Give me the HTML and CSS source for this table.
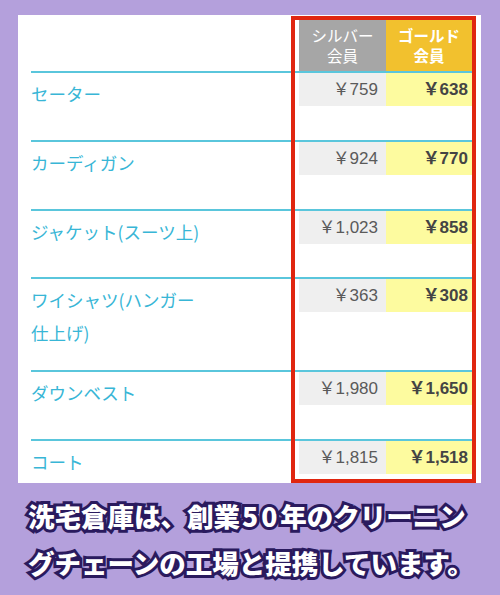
FILE: index.html
```html
<!DOCTYPE html>
<html lang="ja">
<head>
<meta charset="utf-8">
<link rel="stylesheet" href="styles.css">
</head>
<body>
<div class="panel">
  <div class="table">
    <div class="row head">
      <div class="label"></div>
      <div class="cell silver">シルバー<br>会員</div>
      <div class="cell gold">ゴールド<br>会員</div>
    </div>
    <div class="row h69">
      <div class="label">セーター</div>
      <div class="price silver">￥759</div>
      <div class="price gold">￥638</div>
    </div>
    <div class="row h69">
      <div class="label">カーディガン</div>
      <div class="price silver">￥924</div>
      <div class="price gold">￥770</div>
    </div>
    <div class="row h68">
      <div class="label">ジャケット(スーツ上)</div>
      <div class="price silver">￥1,023</div>
      <div class="price gold">￥858</div>
    </div>
    <div class="row h93">
      <div class="label">ワイシャツ(ハンガー<br>仕上げ)</div>
      <div class="price silver">￥363</div>
      <div class="price gold">￥308</div>
    </div>
    <div class="row h69">
      <div class="label">ダウンベスト</div>
      <div class="price silver">￥1,980</div>
      <div class="price gold">￥1,650</div>
    </div>
    <div class="row h69">
      <div class="label">コート</div>
      <div class="price silver">￥1,815</div>
      <div class="price gold">￥1,518</div>
    </div>
  </div>
  <div class="redbox"></div>
</div>
<p class="caption">洗宅倉庫は、創業<span class="num">50</span>年のクリーニン<br>グチェーンの工場と提携しています。</p>
</body>
</html>
```
FILE: styles.css
```css
html, body {
  margin: 0;
  padding: 0;
}
body {
  width: 500px;
  height: 595px;
  background: #b4a0dc;
  font-family: "Noto Sans CJK JP", "Noto Sans", sans-serif;
  overflow: hidden;
}
.panel {
  position: relative;
  margin: 15px 0 0 18px;
  width: 463px;
  height: 468px;
  background: #fff;
  overflow: hidden;
}
.table {
  padding: 3px 0 0 13px;
  width: 441px;
}
.row {
  display: flex;
  align-items: flex-start;
  border-top: 2px solid #5ac6dc;
  box-sizing: border-box;
}
.row.head {
  border-top: none;
  height: 53px;
}
.h69 { height: 69px; }
.h68 { height: 68px; }
.h93 { height: 93px; }
.label {
  width: 268px;
  padding-top: 4px;
  font-size: 17.5px;
  line-height: 33px;
  color: #38b6d6;
}
.cell {
  width: 87px;
  height: 53px;
  box-sizing: border-box;
  padding-top: 7px;
  text-align: center;
  color: #fff;
  font-size: 15.5px;
  line-height: 20px;
}
.cell.silver { background: #a6a6a6; }
.cell.gold { background: #f2c12e; font-weight: bold; width: 86px; }
.price {
  width: 87px;
  height: 33px;
  line-height: 33px;
  text-align: right;
  font-family: "Liberation Sans", "Noto Sans CJK JP", sans-serif;
  font-size: 17px;
  box-sizing: border-box;
}
.price.silver {
  background: #efefef;
  color: #5a5a5a;
  padding-right: 8px;
}
.price.gold {
  width: 86px;
  background: #fdfb9f;
  color: #444;
  font-weight: bold;
  padding-right: 4px;
}
.redbox {
  position: absolute;
  left: 273px;
  top: 1px;
  width: 185px;
  height: 467px;
  border: 4px solid #e02610;
  box-sizing: border-box;
}
.caption {
  margin: 9px 0 0 28px;
  font-size: 26.5px;
  line-height: 47px;
  font-weight: 900;
  color: #fff;
  -webkit-text-stroke: 6px #2a1a5e;
  paint-order: stroke fill;
  white-space: nowrap;
}
.num {
  letter-spacing: 3px;
  margin-left: 2px;
}
```
